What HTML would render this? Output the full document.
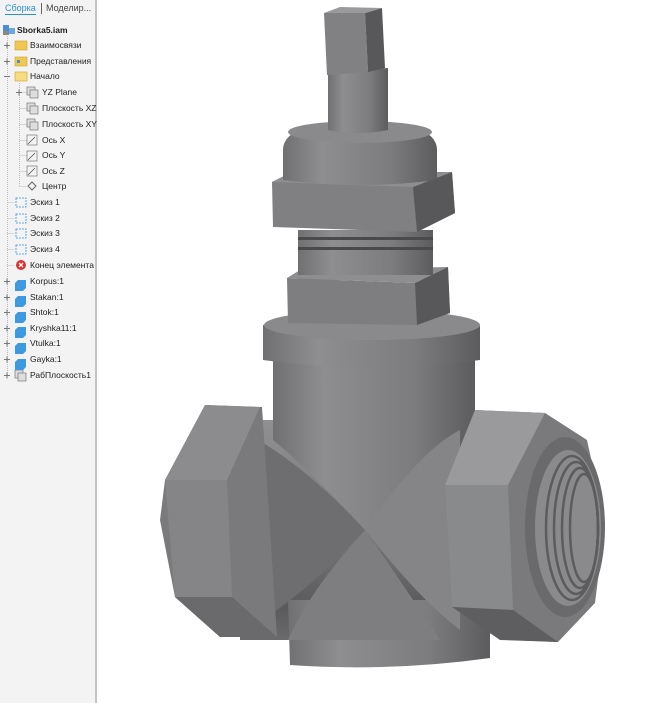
<!DOCTYPE html>
<html><head><meta charset="utf-8"><style>
body{margin:0;width:666px;height:703px;background:#fff;overflow:hidden;font-family:"Liberation Sans","DejaVu Sans",sans-serif;position:relative}
#panel{position:absolute;left:0;top:0;width:95px;height:703px;background:#f3f3f3;border-right:2px solid #c4c4c4}
.tab{position:absolute;top:3px;font-size:9px;color:#444}
.r{position:absolute;font-size:8.5px;color:#222;white-space:nowrap;height:14px;line-height:14px}
.pl{position:absolute;font-size:10px;color:#777;width:8px;text-align:center}
.ic{position:absolute;width:11px;height:10px}
</style></head><body>
<div id="panel">
<div class="tab" style="left:5px;color:#2a8fd6">Сборка</div>
<div style="position:absolute;left:5px;top:14px;width:31px;height:1px;background:#2a8fd6"></div>
<div style="position:absolute;left:41px;top:3px;width:1px;height:11px;background:#666"></div>
<div class="tab" style="left:46px">Моделир...</div>

<svg style="position:absolute;left:0;top:0" width="95" height="400">
<g stroke="#bbb" stroke-dasharray="1,1" fill="none">
<line x1="7.5" y1="36" x2="7.5" y2="376"/>
<line x1="19.5" y1="83" x2="19.5" y2="187"/>
<line x1="19.5" y1="92.5" x2="27" y2="92.5"/><line x1="19.5" y1="108.5" x2="27" y2="108.5"/><line x1="19.5" y1="124.5" x2="27" y2="124.5"/><line x1="19.5" y1="140.5" x2="27" y2="140.5"/><line x1="19.5" y1="155.5" x2="27" y2="155.5"/><line x1="19.5" y1="171.5" x2="27" y2="171.5"/><line x1="19.5" y1="186.5" x2="27" y2="186.5"/>
<line x1="7.5" y1="202.5" x2="14" y2="202.5"/><line x1="7.5" y1="218.5" x2="14" y2="218.5"/><line x1="7.5" y1="233.5" x2="14" y2="233.5"/><line x1="7.5" y1="249.5" x2="14" y2="249.5"/><line x1="7.5" y1="265.5" x2="14" y2="265.5"/>
</g>
<!-- root icon -->
<rect x="3" y="25" width="6" height="6" fill="#4a90d0"/><rect x="9" y="28" width="6" height="6" fill="#6aa8e0"/><rect x="3" y="31" width="6" height="4" fill="#888"/>
<!-- folders -->
<rect x="15" y="41" width="12" height="9" fill="#f0c850" stroke="#c9a030" stroke-width=".6"/>
<rect x="15" y="57" width="12" height="9" fill="#f0c850" stroke="#c9a030" stroke-width=".6"/><rect x="17" y="60" width="3" height="3" fill="#4a90d0"/>
<rect x="15" y="72" width="12" height="9" fill="#f8dc80" stroke="#c9a030" stroke-width=".6"/>
<!-- planes -->
<g fill="#ddd" stroke="#777" stroke-width=".7">
<rect x="27" y="87" width="8" height="8"/><rect x="30" y="90" width="8" height="8"/>
<rect x="27" y="103" width="8" height="8"/><rect x="30" y="106" width="8" height="8"/>
<rect x="27" y="119" width="8" height="8"/><rect x="30" y="122" width="8" height="8"/>
<rect x="27" y="135" width="10" height="10" fill="none"/><rect x="27" y="151" width="10" height="10" fill="none"/><rect x="27" y="166" width="10" height="10" fill="none"/>
<rect x="15" y="370" width="8" height="8"/><rect x="18" y="373" width="8" height="8"/>
</g>
<g stroke="#555" stroke-width=".8"><line x1="28" y1="144" x2="35" y2="137"/><line x1="28" y1="160" x2="35" y2="153"/><line x1="28" y1="175" x2="35" y2="168"/></g>
<path d="M32 182 L36 186 L32 190 L28 186Z" fill="none" stroke="#666"/>
<!-- sketches -->
<g fill="none" stroke="#3a8ee0" stroke-width=".8" stroke-dasharray="2,1">
<rect x="16" y="198" width="10" height="9"/><rect x="16" y="214" width="10" height="9"/><rect x="16" y="229" width="10" height="9"/><rect x="16" y="245" width="10" height="9"/></g>
<circle cx="21" cy="265" r="5" fill="#e03030"/><path d="M19 263l4 4M23 263l-4 4" stroke="#fff" stroke-width="1.3"/>
<g fill="#3d9ae0">
<path d="M15 283 l3-3 h8 v8 l-3 3 h-8z"/><path d="M15 299 l3-3 h8 v8 l-3 3 h-8z"/><path d="M15 315 l3-3 h8 v8 l-3 3 h-8z"/><path d="M15 330 l3-3 h8 v8 l-3 3 h-8z"/><path d="M15 346 l3-3 h8 v8 l-3 3 h-8z"/><path d="M15 362 l3-3 h8 v8 l-3 3 h-8z"/></g>
<g stroke="#777" stroke-width="1"><path d="M4 45.5h6M7 42.5v6M4 61.5h6M7 58.5v6M4 76.5h6M16 92.5h6M19 89.5v6"/>
<path d="M4 281.5h6M7 278.5v6M4 297.5h6M7 294.5v6M4 312.5h6M7 309.5v6M4 328.5h6M7 325.5v6M4 343.5h6M7 340.5v6M4 359.5h6M7 356.5v6M4 375.5h6M7 372.5v6"/></g>
</svg>
<div class="r" style="left:17px;top:23px;font-weight:bold">Sborka5.iam</div>
<div class="r" style="left:30px;top:38px">Взаимосвязи</div>
<div class="r" style="left:30px;top:54px">Представления</div>
<div class="r" style="left:30px;top:69px">Начало</div>
<div class="r" style="left:42px;top:85px">YZ Plane</div>
<div class="r" style="left:42px;top:101px">Плоскость XZ</div>
<div class="r" style="left:42px;top:117px">Плоскость XY</div>
<div class="r" style="left:42px;top:133px">Ось X</div>
<div class="r" style="left:42px;top:148px">Ось Y</div>
<div class="r" style="left:42px;top:164px">Ось Z</div>
<div class="r" style="left:42px;top:179px">Центр</div>
<div class="r" style="left:30px;top:195px">Эскиз 1</div>
<div class="r" style="left:30px;top:211px">Эскиз 2</div>
<div class="r" style="left:30px;top:226px">Эскиз 3</div>
<div class="r" style="left:30px;top:242px">Эскиз 4</div>
<div class="r" style="left:30px;top:258px">Конец элемента</div>
<div class="r" style="left:30px;top:274px">Korpus:1</div>
<div class="r" style="left:30px;top:290px">Stakan:1</div>
<div class="r" style="left:30px;top:305px">Shtok:1</div>
<div class="r" style="left:30px;top:321px">Kryshka11:1</div>
<div class="r" style="left:30px;top:336px">Vtulka:1</div>
<div class="r" style="left:30px;top:352px">Gayka:1</div>
<div class="r" style="left:30px;top:368px">РабПлоскость1</div>
</div>

<svg style="position:absolute;left:0;top:0" width="666" height="703">
<defs>
<linearGradient id="cyl" x1="0" x2="1"><stop offset="0" stop-color="#707072"/><stop offset=".25" stop-color="#8e8e90"/><stop offset=".7" stop-color="#7c7c7e"/><stop offset="1" stop-color="#5c5c5e"/></linearGradient>
<linearGradient id="bar" x1="0" y1="0" x2="0" y2="1"><stop offset="0" stop-color="#909092"/><stop offset=".5" stop-color="#7a7a7c"/><stop offset=".85" stop-color="#5a5a5c"/><stop offset="1" stop-color="#6a6a6c"/></linearGradient>
</defs>
<!-- main body barrel -->
<path d="M240 420 L460 420 L460 640 L240 640Z" fill="url(#bar)"/>
<path d="M288 600 L490 600 L490 658 Q390 672 290 665Z" fill="url(#cyl)"/>
<path d="M273 360 L475 360 L475 450 Q420 480 365 530 Q310 470 273 440Z" fill="url(#cyl)"/>
<path d="M365 530 Q310 590 288 640 L440 640 Q400 580 365 530Z" fill="#7e7e80"/>
<path d="M240 430 Q300 460 365 530 Q300 600 245 630Z" fill="#6e6e70"/>
<path d="M460 430 Q420 450 365 530 Q420 600 460 630Z" fill="#858587"/>
<!-- left nut -->
<path d="M205 405 L262 407 L277 637 L220 637 L175 597 L160 520 L165 480Z" fill="#7a7a7c"/>
<path d="M205 405 L260 407 L227 480 L165 480Z" fill="#8c8c8e"/>
<path d="M165 480 L227 480 L232 597 L175 597Z" fill="#858587"/>
<path d="M175 597 L232 597 L277 637 L220 637Z" fill="#6a6a6c"/>
<!-- right nut -->
<path d="M475 410 L545 413 L587 440 L605 523 L595 603 L558 642 L513 640 L452 607 L445 485Z" fill="#7a7a7c"/>
<path d="M475 410 L545 413 L508 485 L445 485Z" fill="#9a9a9c"/>
<path d="M445 485 L508 485 L513 610 L452 607Z" fill="#888a8c"/>
<path d="M452 607 L513 610 L558 642 L500 640Z" fill="#5e5e60"/>
<ellipse cx="565" cy="527" rx="40" ry="90" fill="#6a6a6c"/>
<ellipse cx="568" cy="528" rx="33" ry="78" fill="#8a8a8c"/>
<g fill="none" stroke="#5c5c5e" stroke-width="2.5"><ellipse cx="572" cy="528" rx="26" ry="72"/><ellipse cx="576" cy="528" rx="22" ry="66"/><ellipse cx="580" cy="528" rx="18" ry="60"/><ellipse cx="584" cy="528" rx="14" ry="54"/></g>
<!-- bonnet -->
<path d="M263 325 Q370 305 480 325 L480 360 Q370 375 263 360Z" fill="url(#cyl)"/>
<ellipse cx="372" cy="325" rx="108" ry="15" fill="#8a8a8c"/>
<!-- nut2 -->
<path d="M298 270 L433 270 L433 280 L298 280Z" fill="#777"/>
<path d="M287 278 L415 283 L448 267 L450 313 L417 325 L288 323Z" fill="#7e7e80"/>
<path d="M415 283 L448 267 L450 313 L417 325Z" fill="#58585a"/>
<path d="M287 278 L300 270 L448 267 L415 283Z" fill="#8e8e90"/>
<!-- threads -->
<rect x="298" y="230" width="135" height="45" fill="url(#cyl)"/>
<rect x="298" y="237" width="135" height="3" fill="#4a4a4c"/><rect x="298" y="247" width="135" height="3" fill="#4a4a4c"/>
<!-- nut1 -->
<path d="M272 182 L290 173 L452 172 L455 213 L417 232 L273 227Z" fill="#808082"/>
<path d="M413 187 L452 172 L455 213 L417 232Z" fill="#58585a"/>
<path d="M272 182 L290 173 L452 172 L413 187Z" fill="#8e8e90"/>
<!-- dome -->
<path d="M283 150 Q283 122 360 120 Q437 122 437 150 L437 180 Q360 190 283 180Z" fill="url(#cyl)"/>
<ellipse cx="360" cy="132" rx="72" ry="11" fill="#8a8a8c"/>
<!-- stem -->
<path d="M328 72 L388 68 L388 130 Q358 136 328 130Z" fill="url(#cyl)"/>
<path d="M324 13 L365 13 L368 72 L327 75Z" fill="#818183"/>
<path d="M365 13 L382 8 L385 68 L368 72Z" fill="#58585a"/>
<path d="M324 13 L340 7 L382 8 L365 13Z" fill="#9a9a9c"/>
</svg>
</body></html>
